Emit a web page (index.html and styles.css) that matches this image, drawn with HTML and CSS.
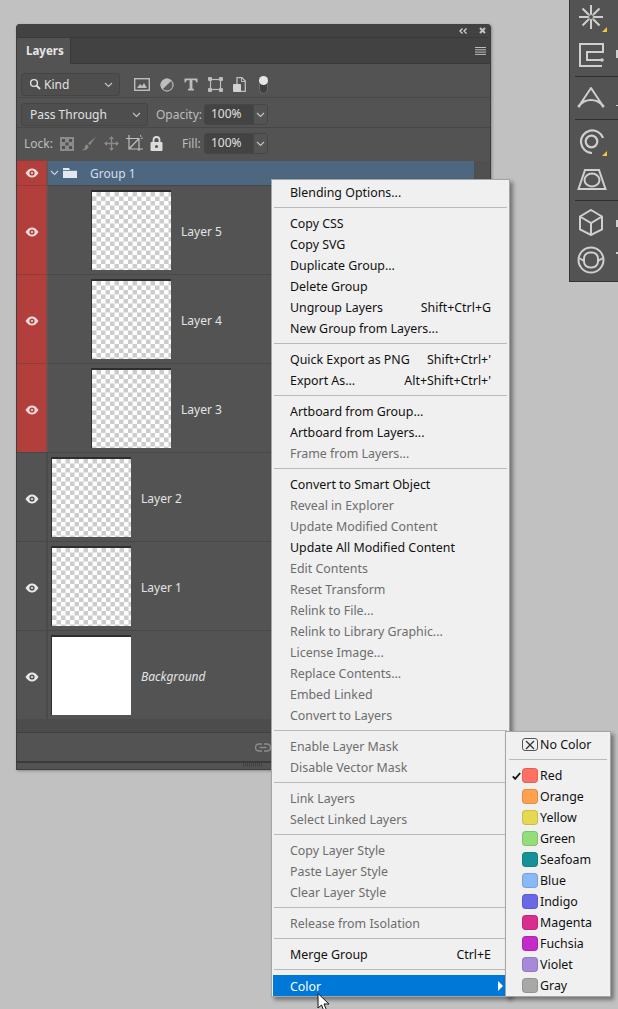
FILE: index.html
```html
<!DOCTYPE html>
<html lang="en">
<head>
<meta charset="utf-8">
<title>Layers</title>
<link rel="stylesheet" href="styles.css">
</head>
<body>
<svg class="defs" width="0" height="0">
  <defs>
    <pattern id="checks" width="9" height="9" patternUnits="userSpaceOnUse">
      <rect width="9" height="9" fill="#fff"/>
      <rect x="4.500" width="4.500" height="4.500" fill="#ccc"/>
      <rect y="4.500" width="4.500" height="4.500" fill="#ccc"/>
    </pattern>
    <symbol id="eye" viewBox="0 0 14 10">
      <path d="M0.500 5C3 1.200 5 0.500 7 0.500S11 1.200 13.500 5C11 8.800 9 9.500 7 9.500S3 8.800 0.500 5Z" fill="currentColor"/>
      <circle cx="7" cy="5" r="2.600" fill="var(--eye-bg)"/>
      <circle cx="7" cy="5" r="1.100" fill="currentColor"/>
    </symbol>
    <symbol id="chev" viewBox="0 0 9 6">
      <path d="M1 1l3.500 3.500L8 1" fill="none" stroke="currentColor" stroke-width="1.100"/>
    </symbol>
  </defs>
</svg>

<main class="desktop">
  <section class="panel">
    <div class="titlebar">
      <svg width="8" height="6" viewBox="0 0 8 6"><path d="M3.500 0.500L1 3l2.500 2.500M7.500 0.500L5 3l2.500 2.500" fill="none" stroke="#d4d4d4" stroke-width="1.300"/></svg>
      <svg width="7" height="7" viewBox="0 0 7 7"><path d="M1 1l5 5M6 1L1 6" stroke="#c4c4c4" stroke-width="2"/></svg>
    </div>
    <div class="tabbar">
      <div class="tab">Layers</div>
      <svg class="panel-menu" width="11" height="8" viewBox="0 0 11 8"><path d="M0 0.500h11M0 2.800h11M0 5.100h11M0 7.400h11" stroke="#bcbcbc" stroke-width="1"/></svg>
    </div>

    <div class="toolrow kindrow">
      <div class="select kind">
        <svg width="13" height="13" viewBox="0 0 13 13"><circle cx="5" cy="5" r="3.400" fill="none" stroke="#e4e4e4" stroke-width="1.400"/><path d="M7.600 7.600L11 11" stroke="#e4e4e4" stroke-width="1.800"/></svg>
        <span class="grow">Kind</span>
        <svg class="chev" width="9" height="6"><use href="#chev"/></svg>
      </div>
      <div class="filters">
        <svg width="16" height="13" viewBox="0 0 16 13"><rect x="0.700" y="0.700" width="14.600" height="11.600" fill="none" stroke="#bdbdbd" stroke-width="1.400"/><path d="M3 10l3-4 2 2 2-3 3 5Z" fill="#bdbdbd"/></svg>
        <svg width="14" height="14" viewBox="0 0 14 14"><circle cx="7" cy="7" r="6.500" fill="#bdbdbd"/><path d="M11.600 2.400A6.500 6.500 0 0 1 2.400 11.600Z" fill="#5a5a5a"/><circle cx="7" cy="7" r="6" fill="none" stroke="#bdbdbd"/></svg>
        <svg width="14" height="13" viewBox="0 0 14 13"><path d="M0.500 0.500h13v4h-1.200c-.3-1.600-1-2.200-2.300-2.200H8.400v8.200l1.600.6v1.400H4v-1.400l1.600-.6V2.300H4c-1.300 0-2 .6-2.300 2.200H.5Z" fill="#bdbdbd"/></svg>
        <svg width="15" height="15" viewBox="0 0 15 15"><rect x="2.500" y="2.500" width="10" height="10" fill="none" stroke="#bdbdbd" stroke-width="1.200"/><g fill="#bdbdbd"><rect width="4" height="4" rx="1"/><rect x="11" width="4" height="4" rx="1"/><rect y="11" width="4" height="4" rx="1"/><rect x="11" y="11" width="4" height="4" rx="1"/></g></svg>
        <svg width="13" height="15" viewBox="0 0 13 15"><path d="M4 0.700h5l3.300 3.300v10.300H4Z" fill="none" stroke="#bdbdbd" stroke-width="1.300"/><path d="M8.500 0.700V4.500h3.800" fill="none" stroke="#bdbdbd"/><rect x="0" y="7" width="8" height="8" rx="1" fill="#d2d2d2"/></svg>
        <span class="toggle"><i></i></span>
      </div>
    </div>

    <div class="toolrow blendrow">
      <div class="select blend"><span class="grow">Pass Through</span><svg class="chev" width="9" height="6"><use href="#chev"/></svg></div>
      <span class="label op-label">Opacity:</span>
      <div class="combo"><span class="val">100%</span><span class="drop"><svg class="chev" width="9" height="6"><use href="#chev"/></svg></span></div>
    </div>

    <div class="toolrow lockrow">
      <span class="label lock-label">Lock:</span>
      <div class="locks">
        <svg width="14" height="14" viewBox="0 0 14 14"><rect width="14" height="14" fill="#8a8a8a"/><g fill="#4f4f4f"><rect x="2" y="2" width="3" height="3"/><rect x="9" y="2" width="3" height="3"/><rect x="5.500" y="5.500" width="3" height="3"/><rect x="2" y="9" width="3" height="3"/><rect x="9" y="9" width="3" height="3"/></g></svg>
        <svg width="16" height="16" viewBox="0 0 16 16"><path d="M15 0.500L7 7.500l1.800 1.800ZM6 8.500c-2 .4-2 2.500-2.500 3.800-.3.800-1.200 1.200-2.500 1.700 3 .7 5.700-.3 6.700-3.500Z" fill="#8a8a8a"/></svg>
        <svg width="15" height="15" viewBox="0 0 15 15"><path d="M7.500 0L10 3H8.200v3.800H12V5l3 2.500L12 10V8.200H8.200V12H10l-2.500 3L5 12h1.800V8.200H3V10L0 7.500 3 5v1.800h3.800V3H5Z" fill="#8a8a8a"/></svg>
        <svg width="17" height="17" viewBox="0 0 17 17"><path d="M3 3.500h10V16M0 3.500h3V0M3 3.500V14h14M3 14L13 3.500" fill="none" stroke="#bdbdbd" stroke-width="1.200"/><path d="M14.500 0l.5 2M16.800 3l-2 .5" stroke="#bdbdbd"/></svg>
        <svg width="13" height="15" viewBox="0 0 13 15"><path d="M3.500 6V4a3 3 0 0 1 6 0v2" fill="none" stroke="#dcdcdc" stroke-width="1.800"/><rect x="0.500" y="6" width="12" height="9" rx="1" fill="#dcdcdc"/><circle cx="6.500" cy="10.500" r="1.500" fill="#535353"/></svg>
      </div>
      <span class="label fill-label">Fill:</span>
      <div class="combo"><span class="val">100%</span><span class="drop"><svg class="chev" width="9" height="6"><use href="#chev"/></svg></span></div>
    </div>

    <div class="layers">
      <div class="row group">
        <div class="vis red"><svg class="eye" width="14" height="10"><use href="#eye"/></svg></div>
        <div class="group-main">
          <svg class="twist" width="9" height="6"><use href="#chev"/></svg>
          <svg width="14" height="10" viewBox="0 0 14 10"><path d="M0 0h6l1 2h7v8H0Z" fill="#e3e8ee"/><path d="M0 2.500h14" stroke="#4d6780" stroke-width="0.800"/></svg>
          <span class="group-name">Group 1</span>
        </div>
      </div>

      <div class="row layer"><div class="vis red"><svg class="eye" width="14" height="10"><use href="#eye"/></svg></div><div class="indent"></div><svg class="thumb" width="80" height="80"><rect width="80" height="80" fill="url(#checks)"/></svg><span class="lname">Layer 5</span></div>
      <div class="row layer"><div class="vis red"><svg class="eye" width="14" height="10"><use href="#eye"/></svg></div><div class="indent"></div><svg class="thumb" width="80" height="80"><rect width="80" height="80" fill="url(#checks)"/></svg><span class="lname">Layer 4</span></div>
      <div class="row layer"><div class="vis red"><svg class="eye" width="14" height="10"><use href="#eye"/></svg></div><div class="indent"></div><svg class="thumb" width="80" height="80"><rect width="80" height="80" fill="url(#checks)"/></svg><span class="lname">Layer 3</span></div>
      <div class="row layer"><div class="vis"><svg class="eye" width="14" height="10"><use href="#eye"/></svg></div><svg class="thumb" width="80" height="80"><rect width="80" height="80" fill="url(#checks)"/></svg><span class="lname">Layer 2</span></div>
      <div class="row layer"><div class="vis"><svg class="eye" width="14" height="10"><use href="#eye"/></svg></div><svg class="thumb" width="80" height="80"><rect width="80" height="80" fill="url(#checks)"/></svg><span class="lname">Layer 1</span></div>
      <div class="row layer"><div class="vis"><svg class="eye" width="14" height="10"><use href="#eye"/></svg></div><svg class="thumb" width="80" height="80"><rect width="80" height="80" fill="#fff"/></svg><span class="lname ital">Background</span></div>
    </div>

    <div class="footer">
      <svg width="16" height="9" viewBox="0 0 16 9"><path d="M7 1H4a3.500 3.500 0 0 0 0 7h3M9 1h3a3.500 3.500 0 0 1 0 7H9M4.500 4.500h7" fill="none" stroke="#8c8c8c" stroke-width="1.500"/></svg>
    </div>
    <div class="resize"><span class="grip"></span></div>
  </section>

  <aside class="tools">
    <svg class="ti t-star" width="24" height="24" viewBox="0 0 24 24"><g stroke="#cfcfcf" stroke-width="2" fill="none"><path d="M12 0v9M12 15v9M0 12h9M15 12h9M3.500 3.500l6.300 6.300M14.200 14.200l6.300 6.300M20.500 3.500l-6.300 6.300M9.800 14.200l-6.300 6.300"/></g><circle cx="12" cy="12" r="2.500" fill="none" stroke="#cfcfcf"/></svg>
    <svg class="ti t-c" width="25" height="24" viewBox="0 0 25 24"><path d="M23 23H1V1h23v8H8v8h15" fill="none" stroke="#cfcfcf" stroke-width="2"/><circle cx="23" cy="17" r="1.800" fill="#cfcfcf"/></svg>
    <hr class="h1">
    <svg class="ti t-arch" width="28" height="21" viewBox="0 0 28 21"><path d="M2 19L14 1l12 18M2 19C8 11 20 11 26 19" fill="none" stroke="#cfcfcf" stroke-width="2" stroke-linejoin="round"/><circle cx="2" cy="19" r="1.500" fill="#cfcfcf"/><circle cx="26" cy="19" r="1.500" fill="#cfcfcf"/></svg>
    <hr class="h2">
    <svg class="ti t-spiral" width="25" height="25" viewBox="0 0 25 25"><path d="M24 9A11.300 11.300 0 1 0 13 24" fill="none" stroke="#cfcfcf" stroke-width="2.200"/><circle cx="12.500" cy="12.500" r="5.800" fill="none" stroke="#cfcfcf" stroke-width="2.200"/></svg>
    <svg class="ti t-trap" width="30" height="21" viewBox="0 0 30 21"><path d="M8 1h14l6.500 19h-27Z" fill="none" stroke="#cfcfcf" stroke-width="2"/><ellipse cx="15" cy="11" rx="7.500" ry="6.500" fill="none" stroke="#cfcfcf" stroke-width="2"/></svg>
    <hr class="h3">
    <svg class="ti t-cube" width="26" height="27" viewBox="0 0 26 27"><path d="M13 1l11 6.500v13L13 26 2 20.500v-13ZM2 7.500l11 6.500 11-6.500M13 14v12" fill="none" stroke="#cfcfcf" stroke-width="2"/></svg>
    <svg class="ti t-ring" width="28" height="28" viewBox="0 0 28 28"><circle cx="14" cy="14" r="12.500" fill="none" stroke="#cfcfcf" stroke-width="2"/><rect x="7" y="6.500" width="14" height="15" rx="6" fill="none" stroke="#cfcfcf" stroke-width="2"/><path d="M2 12l5 3M26 12l-5 3" stroke="#cfcfcf" stroke-width="2"/></svg>
    <i class="tri t1"></i><i class="tri t2"></i>
    <i class="mark m1"></i><i class="mark m2"></i><i class="mark m3"></i><i class="mark m4"></i>
  </aside>

  <nav class="menu main-menu">
    <div class="mi">Blending Options...</div>
    <div class="sep"></div>
    <div class="mi">Copy CSS</div>
    <div class="mi">Copy SVG</div>
    <div class="mi">Duplicate Group...</div>
    <div class="mi">Delete Group</div>
    <div class="mi"><span>Ungroup Layers</span><span>Shift+Ctrl+G</span></div>
    <div class="mi">New Group from Layers...</div>
    <div class="sep"></div>
    <div class="mi"><span>Quick Export as PNG</span><span>Shift+Ctrl+'</span></div>
    <div class="mi"><span>Export As...</span><span>Alt+Shift+Ctrl+'</span></div>
    <div class="sep"></div>
    <div class="mi">Artboard from Group...</div>
    <div class="mi">Artboard from Layers...</div>
    <div class="mi off">Frame from Layers...</div>
    <div class="sep"></div>
    <div class="mi">Convert to Smart Object</div>
    <div class="mi off">Reveal in Explorer</div>
    <div class="mi off">Update Modified Content</div>
    <div class="mi">Update All Modified Content</div>
    <div class="mi off">Edit Contents</div>
    <div class="mi off">Reset Transform</div>
    <div class="mi off">Relink to File...</div>
    <div class="mi off">Relink to Library Graphic...</div>
    <div class="mi off">License Image...</div>
    <div class="mi off">Replace Contents...</div>
    <div class="mi off">Embed Linked</div>
    <div class="mi off">Convert to Layers</div>
    <div class="sep"></div>
    <div class="mi off">Enable Layer Mask</div>
    <div class="mi off">Disable Vector Mask</div>
    <div class="sep"></div>
    <div class="mi off">Link Layers</div>
    <div class="mi off">Select Linked Layers</div>
    <div class="sep"></div>
    <div class="mi off">Copy Layer Style</div>
    <div class="mi off">Paste Layer Style</div>
    <div class="mi off">Clear Layer Style</div>
    <div class="sep"></div>
    <div class="mi off">Release from Isolation</div>
    <div class="sep"></div>
    <div class="mi"><span>Merge Group</span><span>Ctrl+E</span></div>
    <div class="sep"></div>
    <div class="mi active"><span>Color</span><i class="arrow"></i></div>
  </nav>

  <nav class="menu sub-menu">
    <div class="ci"><span class="check"></span><span class="nocolor"><svg width="10" height="10" viewBox="0 0 10 10"><path d="M1 1l8 8M9 1L1 9" stroke="#333" stroke-width="1.300"/></svg></span><span>No Color</span></div>
    <div class="sep sub-sep"></div>
    <div class="ci"><span class="check"><svg width="9" height="8" viewBox="0 0 9 8"><path d="M0.800 4.300L3.200 6.800 8.200 1" fill="none" stroke="#111" stroke-width="1.800"/></svg></span><span class="sw red-s"></span><span>Red</span></div>
    <div class="ci"><span class="check"></span><span class="sw orange-s"></span><span>Orange</span></div>
    <div class="ci"><span class="check"></span><span class="sw yellow-s"></span><span>Yellow</span></div>
    <div class="ci"><span class="check"></span><span class="sw green-s"></span><span>Green</span></div>
    <div class="ci"><span class="check"></span><span class="sw seafoam-s"></span><span>Seafoam</span></div>
    <div class="ci"><span class="check"></span><span class="sw blue-s"></span><span>Blue</span></div>
    <div class="ci"><span class="check"></span><span class="sw indigo-s"></span><span>Indigo</span></div>
    <div class="ci"><span class="check"></span><span class="sw magenta-s"></span><span>Magenta</span></div>
    <div class="ci"><span class="check"></span><span class="sw fuchsia-s"></span><span>Fuchsia</span></div>
    <div class="ci"><span class="check"></span><span class="sw violet-s"></span><span>Violet</span></div>
    <div class="ci"><span class="check"></span><span class="sw gray-s"></span><span>Gray</span></div>
  </nav>

  <svg class="cursor" width="14" height="20" viewBox="0 0 14 20"><path d="M1 0.500V15l3.500-3 2.500 6 2.500-1-2.500-6H12Z" fill="#fff" stroke="#111" stroke-width="1"/></svg>
</main>
</body>
</html>
```
FILE: styles.css
```css
* { box-sizing: border-box; }
html, body { margin: 0; height: 100%; }
body {
  background: #c1c1c1;
  font-family: "Noto Sans", "DejaVu Sans", sans-serif;
  font-size: 12px;
  overflow: hidden;
}
.defs { position: absolute; }
.desktop { position: relative; width: 618px; height: 1009px; padding: 24px 0 0 16px; }

/* Layers panel */
.panel {
  width: 475px;
  height: 746px;
  background: #535353;
  border: 1px solid #3d3d3d;
  border-top: 0;
  border-radius: 4px 4px 0 0;
  box-shadow: 1px 1px 3px rgba(0,0,0,.3);
  color: #d8d8d8;
  display: flex;
  flex-direction: column;
  overflow: hidden;
}
.titlebar {
  height: 13px;
  background: #424242;
  display: flex;
  justify-content: flex-end;
  align-items: center;
  gap: 12px;
  padding: 0 4px 0 0;
}
.tabbar {
  height: 27px;
  background: #424242;
  border-top: 1px solid #3a3a3a;
  border-bottom: 1px solid #3a3a3a;
  display: flex;
  align-items: stretch;
  justify-content: space-between;
}
.tab {
  width: 54px;
  background: #535353;
  border-right: 1px solid #3a3a3a;
  margin-bottom: -1px;
  padding: 5px 0 0 9px;
  font-weight: 700;
  font-size: 11.500px;
  color: #e6e6e6;
}
.panel-menu { align-self: center; margin-right: 4px; }
.toolrow { display: flex; align-items: center; border-bottom: 1px solid #474747; flex: none; }
.kindrow { height: 34px; padding: 8px 0 0 4px; }
.blendrow { height: 30px; padding: 4px 0 0 4px; }
.lockrow { height: 33px; padding: 0 0 2px 7px; border-bottom: 0; }
.select {
  height: 23px;
  border: 1px solid #454545;
  border-radius: 3px;
  background: #4e4e4e;
  display: flex;
  align-items: center;
  color: #e2e2e2;
  font-size: 12px;
}
.grow { flex: 1; }
.chev { color: #c4c4c4; }
.kind { width: 99px; gap: 2px; padding: 0 6px 0 7px; }
.blend { width: 127px; padding: 0 6px 0 8px; }
.filters { display: flex; align-items: center; gap: 10px; margin-left: 14px; }
.toggle {
  width: 9px; height: 18px; margin-left: 3px;
  border: 1px solid #6a6a6a; border-radius: 5px;
  position: relative; background: #3f3f3f;
}
.toggle i {
  position: absolute; left: -1px; top: -1px;
  width: 9px; height: 9px; border-radius: 50%; background: #e6e6e6;
}
.label { color: #bdbdbd; font-size: 12px; flex: none; }
.op-label { margin-left: 8px; width: 48px; }
.lock-label { width: 29px; }
.combo {
  width: 64px; height: 21px;
  border: 1px solid #464646; border-radius: 3px;
  display: flex; background: #434343; flex: none;
}
.val { width: 48px; padding-left: 6px; color: #e0e0e0; line-height: 18px; font-size: 12px; }
.drop { flex: 1; background: #535353; border-left: 1px solid #464646; display: flex; align-items: center; justify-content: center; }
.locks { display: flex; align-items: center; gap: 7px; margin-left: 7px; width: 112px; flex: none; }
.fill-label { margin-left: 10px; width: 22px; }

.layers { height: 571px; background: #4c4c4c; flex: none; }
.row { display: flex; align-items: stretch; }
.group { height: 24px; background: #505050; }
.layer { height: 89px; background: #535353; border-top: 1px solid #484848; align-items: center; }
.vis {
  --eye-bg: #535353;
  width: 31px; align-self: stretch; flex: none;
  border-right: 2px solid #4a4a4a;
  padding-left: 1px;
  color: #e9e9e9;
  display: flex; align-items: center; justify-content: center;
}
.layer .vis { padding-top: 3px; }
.vis.red { --eye-bg: #b23f3c; background: #b23f3c; color: #f1dcdc; border-right-color: #73504e; box-shadow: 0 -1px 0 #8a3d3a; }
.group-main { width: 426px; background: #4d6780; display: flex; align-items: center; padding-left: 2px; gap: 4px; color: #d7dfe8; }
.twist { color: #c9d3de; }
.group-name { margin-left: 9px; font-size: 12px; }
.indent { width: 43px; flex: none; }
.thumb { flex: none; border-top: 2px solid #2e2e2e; border-left: 1px solid #2e2e2e; margin-left: 3px; display: block; }
.indent + .thumb { margin-left: 0; }
.lname { margin: 2px 0 0 10px; font-size: 12px; color: #e4e4e4; }
.ital { font-style: italic; }
.footer { height: 29px; background: #535353; border-top: 1px solid #404040; display: flex; align-items: center; padding: 0 0 0 238px; flex: none; }
.resize { flex: 1; background: #535353; border-top: 2px solid #3b3b3b; padding-left: 226px; }
.grip { display: block; width: 20px; height: 4px; background: repeating-linear-gradient(90deg, #444 0 1px, transparent 1px 2px); }

/* Menus */
.menu {
  position: absolute;
  background: #f0f0f0;
  border: 1px solid #a5a5a5;
  box-shadow: 3px 3px 4px rgba(0,0,0,.4);
  color: #111;
  font-size: 12.400px;
}
.main-menu { left: 271px; top: 179px; width: 239px; height: 818px; padding: 2px 1px 0; }
.mi {
  height: 21px;
  padding: 0 17px 0 17px;
  line-height: 21px;
  display: flex;
  justify-content: space-between;
  white-space: nowrap;
}
.off { color: #6d6d6d; }
.sep { height: 1px; background: #b9b9b9; margin: 4px 1px 5px; }
.active { background: #0078d7; color: #fff; position: relative; line-height: 24px; }
.arrow {
  position: absolute; right: 5px; top: 6px;
  border-left: 5px solid #fff; border-top: 5px solid transparent; border-bottom: 5px solid transparent;
}

.sub-menu { left: 505px; top: 731px; width: 106px; height: 266px; padding: 2px 1px 0; }
.ci { height: 21px; display: flex; align-items: center; }
.check { width: 15px; flex: none; display: flex; justify-content: flex-end; padding-right: 1px; }
.nocolor, .sw { width: 16px; height: 15px; margin-right: 2px; flex: none; border-radius: 4px; box-shadow: inset 0 0 0 1px rgba(0,0,0,.12); }
.nocolor { height: 13px; border: 1px solid #555; border-radius: 3px; display: flex; align-items: center; justify-content: center; box-shadow: none; }
.sub-sep { margin: 4px 2px 5px; }
.red-s { background: #ff6f64; }
.orange-s { background: #ffa24d; }
.yellow-s { background: #e6d850; }
.green-s { background: #94dd7a; }
.seafoam-s { background: #149297; }
.blue-s { background: #8ab8f8; }
.indigo-s { background: #6a68e6; }
.magenta-s { background: #d92e8e; }
.fuchsia-s { background: #c32cc9; }
.violet-s { background: #a48ad8; }
.gray-s { background: #a8a8a8; }

/* Floating tools strip */
.tools {
  position: absolute;
  left: 569px; top: -4px;
  width: 60px; height: 286px;
  background: #535353;
  border: 1px solid #333;
  display: flex;
  flex-direction: column;
  align-items: flex-start;
  overflow: hidden;
}
.ti { display: block; flex: none; }
.t-star { margin: 8px 0 0 9px; }
.t-c { margin: 14px 0 0 9px; }
.t-arch { margin: 10px 0 0 7px; }
.t-spiral { margin: 9px 0 0 9px; }
.t-trap { margin: 15px 0 0 7px; }
.t-cube { margin: 8px 0 0 8px; }
.t-ring { margin: 10px 0 0 7px; }
.tools hr { width: 60px; flex: none; margin: 0 0 0 5px; border: 0; border-top: 1px solid #2f2f2f; }
.tools .h1 { margin-top: 9px; }
.tools .h2 { margin-top: 11px; }
.tools .h3 { margin-top: 10px; }
.tri { position: absolute; width: 0; height: 0; border-bottom: 5px solid #f0c93c; border-left: 5px solid transparent; }
.t1 { left: 32px; top: 30px; }
.t2 { left: 32px; top: 154px; }
.mark { position: absolute; left: 46px; width: 2px; background: #cfcfcf; }
.m1 { top: 53px; height: 8px; }
.m2 { top: 108px; height: 1px; }
.m3 { top: 223px; height: 7px; }
.m4 { top: 255px; height: 2px; }

.cursor { position: absolute; left: 317px; top: 993px; }
```
